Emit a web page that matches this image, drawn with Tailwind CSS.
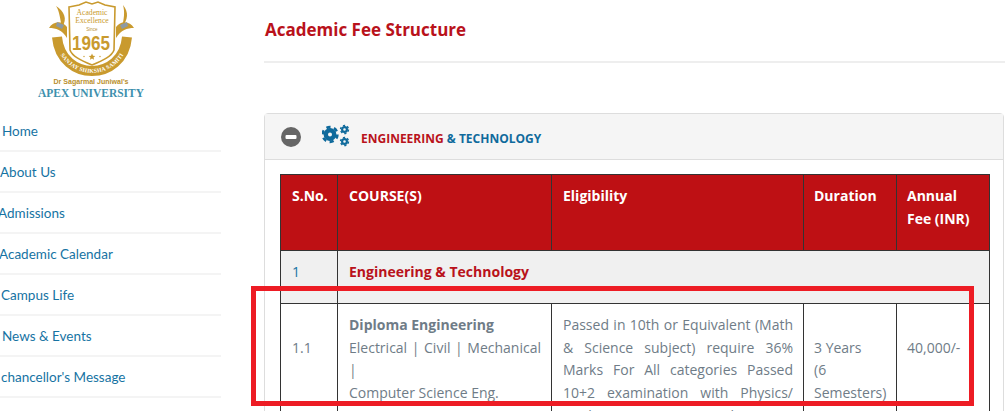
<!DOCTYPE html>
<html lang="en">
<head>
    <meta charset="UTF-8">
    <title>Academic Fee Structure</title>
    <script src="https://cdn.jsdelivr.net/npm/@tailwindcss/browser@4"></script>
</head>
<body class="bg-white h-[411px] w-[1005px] overflow-hidden relative font-['Open_Sans',sans-serif]">
    <div class="flex h-full">
        <!-- Sidebar -->
        <aside class="w-[264px] shrink-0">
            <svg class="block ml-[38px] w-[108px] h-[100px] overflow-visible" viewBox="38 0 108 100">
                <!-- horns and ribbon ends -->
                <path d="M56 6 C64 11 68 19 62 27 C60 20 60 12 56 6 Z" fill="#c99a2e"/>
                <path d="M123 5 C129 12 128 20 122 27 C124 19 125 12 123 5 Z" fill="#c99a2e"/>
                <path d="M49 28 C53 21 62 20 67 27 L67 38 C62 30 56 28 49 28 Z" fill="#c99a2e"/>
                <path d="M134 28 C130 21 121 20 116 27 L116 38 C121 30 127 28 134 28 Z" fill="#c99a2e"/>
                <path d="M57 22 L64 25 L62 29 L56 26 Z" fill="#8e9aa3"/>
                <path d="M127 22 L120 25 L122 29 L128 26 Z" fill="#8e9aa3"/>
                <!-- ribbon band -->
                <path id="band" d="M57 37 C59 60 76 71 92 71 C108 71 125 60 127 37" fill="none" stroke="#c99a2e" stroke-width="10"/>
                <!-- shield -->
                <path d="M69 7 L79 5 L86 2 L92 4 L98 2 L105 5 L115 7 L114 50 C112 56 104 60 92 65 C80 60 72 56 70 50 Z" fill="#fff" stroke="#c99a2e" stroke-width="1.6"/>
                <text x="92" y="15" text-anchor="middle" font-family="Liberation Serif" font-size="7.6" fill="#c99a2e">Academic</text>
                <text x="92" y="23" text-anchor="middle" font-family="Liberation Serif" font-size="7.6" fill="#c99a2e">Excellence</text>
                <text x="92" y="31" text-anchor="middle" font-family="Liberation Sans" font-size="4.5" fill="#b9923a">Since</text>
                <text x="91" y="50" text-anchor="middle" font-family="Liberation Sans" font-size="20" font-weight="700" textLength="38" lengthAdjust="spacingAndGlyphs" fill="#c99a2e">1965</text>
                <path d="M92 53.5 l1 2.2 2.3.2-1.8 1.5.6 2.3-2.1-1.2-2.1 1.2.6-2.3-1.8-1.5 2.3-.2z" fill="#c99a2e"/>
                <circle cx="84" cy="56.5" r=".7" fill="#c99a2e"/>
                <circle cx="100" cy="56.5" r=".7" fill="#c99a2e"/>
                <text font-family="Liberation Serif" font-size="5.8" font-weight="700" fill="#fff" dy="1.8">
                    <textPath href="#band" startOffset="50%" text-anchor="middle">SANJAY SHIKSHA SAMITI</textPath>
                </text>
                <text x="91" y="84" text-anchor="middle" font-family="Liberation Sans" font-size="6.4" font-weight="700" textLength="75" lengthAdjust="spacingAndGlyphs" fill="#b98f2c">Dr Sagarmal Juniwal's</text>
                <text x="91" y="97" text-anchor="middle" font-family="Liberation Serif" font-size="12" font-weight="700" textLength="106" lengthAdjust="spacingAndGlyphs" fill="#3d90ad">APEX UNIVERSITY</text>
            </svg>
            <ul class="w-[221px] mt-[11px] font-['Lato',sans-serif] text-[13.5px] text-[#1673a3]">
                <li class="h-[41px] border-b-2 border-[#f4f4f4] pl-[2px] leading-[40px]">Home</li>
                <li class="h-[41px] border-b-2 border-[#f4f4f4] leading-[40px]">About Us</li>
                <li class="h-[41px] border-b-2 border-[#f4f4f4] ml-[-2px] leading-[40px]">Admissions</li>
                <li class="h-[41px] border-b-2 border-[#f4f4f4] ml-[-1px] leading-[40px]">Academic Calendar</li>
                <li class="h-[41px] border-b-2 border-[#f4f4f4] pl-[1px] leading-[40px]">Campus Life</li>
                <li class="h-[41px] border-b-2 border-[#f4f4f4] pl-[2px] leading-[40px]">News &amp; Events</li>
                <li class="h-[41px] border-b-2 border-[#f4f4f4] pl-[1px] leading-[40px]">chancellor's Message</li>
            </ul>
        </aside>

        <!-- Main -->
        <main class="flex-1 min-w-0">
            <div class="h-[63px] border-b-2 border-[#eeeeee] pl-px pt-[18px]">
                <h1 class="text-[17px] leading-[24px] font-bold text-[#b9121b]">Academic Fee Structure</h1>
            </div>
            <div class="mt-[50px] w-[740px] border border-[#dddddd] rounded-t-[4px]">
                <div class="h-[46px] bg-[#f5f5f5] border-b border-[#dddddd] flex items-center pl-[16px]">
                    <svg class="w-[20px] h-[20px] shrink-0" viewBox="0 0 20 20">
                        <circle cx="10" cy="10" r="10" fill="#666666"/>
                        <rect x="4.5" y="8" width="11" height="4" rx="1" fill="#ffffff"/>
                    </svg>
                    <svg class="ml-[21px] mt-[-1px] w-[28px] h-[24px] shrink-0" viewBox="0 0 28 24" fill="none" stroke="#0f6a9c">
                        <circle cx="8" cy="10.5" r="4.2" stroke-width="4.4"/>
                        <circle cx="8" cy="10.5" r="7.4" stroke-width="2.6" stroke-dasharray="4.2 3.55"/>
                        <circle cx="22.5" cy="5.5" r="2.4" stroke-width="2.2"/>
                        <circle cx="22.5" cy="5.5" r="4" stroke-width="1.4" stroke-dasharray="2.2 2"/>
                        <circle cx="22.5" cy="17.5" r="2.4" stroke-width="2.2"/>
                        <circle cx="22.5" cy="17.5" r="4" stroke-width="1.4" stroke-dasharray="2.2 2"/>
                    </svg>
                    <h2 class="ml-[11px] mt-[5px] text-[12px] font-bold text-[#0f6a9c]"><span class="text-[#b9121b]">ENGINEERING</span> &amp; TECHNOLOGY</h2>
                </div>
                <div class="px-[15px] pt-[14px]">
                    <table class="w-[709px] table-fixed border-collapse text-[14px] leading-[22.6px] text-[#6f7c87]">
                        <colgroup>
                            <col class="w-[57px]">
                            <col class="w-[214px]">
                            <col class="w-[252px]">
                            <col class="w-[93px]">
                            <col class="w-[93px]">
                        </colgroup>
                        <thead>
                            <tr class="bg-[#be1014] text-white font-bold text-left align-top">
                                <th class="border border-[#333333] pt-[10px] pb-[20px] pl-[11px] pr-[10px]">S.No.</th>
                                <th class="border border-[#333333] pt-[10px] pb-[20px] pl-[11px] pr-[10px]">COURSE(S)</th>
                                <th class="border border-[#333333] pt-[10px] pb-[20px] pl-[11px] pr-[10px]">Eligibility</th>
                                <th class="border border-[#333333] pt-[10px] pb-[20px] px-[10px]">Duration</th>
                                <th class="border border-[#333333] pt-[10px] pb-[20px] px-[10px]">Annual<br>Fee (INR)</th>
                            </tr>
                        </thead>
                        <tbody>
                            <tr class="bg-[#f0f0f0] align-top">
                                <td class="border border-[#333333] pt-[10px] pb-[19.5px] pl-[11px] pr-[10px] text-[#1673a3]">1</td>
                                <td colspan="4" class="border border-[#333333] pt-[10px] pb-[19.5px] pl-[11px] pr-[10px] font-bold text-[#b9121b]">Engineering &amp; Technology</td>
                            </tr>
                            <tr class="align-top">
                                <td class="border border-[#333333] py-[10px] pl-[11px] pr-[10px]"><br>1.1</td>
                                <td class="border border-[#333333] py-[10px] pl-[11px] pr-[10px]">
                                    <b>Diploma Engineering</b><br>
                                    <span class="block text-justify">Electrical | Civil | Mechanical |</span>
                                    Computer Science Eng.
                                </td>
                                <td class="border border-[#333333] py-[10px] pl-[11px] pr-[10px] text-justify">Passed in 10th or Equivalent (Math &amp; Science subject) require 36% Marks For All categories Passed 10+2 examination with Physics/ Mathematics or Chemistry/ Biotechnology</td>
                                <td class="border border-[#333333] py-[10px] px-[10px]"><br>3 Years<br>(6<br>Semesters)</td>
                                <td class="border border-[#333333] py-[10px] px-[10px]"><br>40,000/-</td>
                            </tr>
                        </tbody>
                    </table>
                </div>
            </div>
        </main>
    </div>

    <!-- Red annotation box drawn over the page -->
    <div class="absolute left-[251px] top-[286px] w-[723px] h-[120px] border-[5px] border-[#ed1c24]"></div>
</body>
</html>
